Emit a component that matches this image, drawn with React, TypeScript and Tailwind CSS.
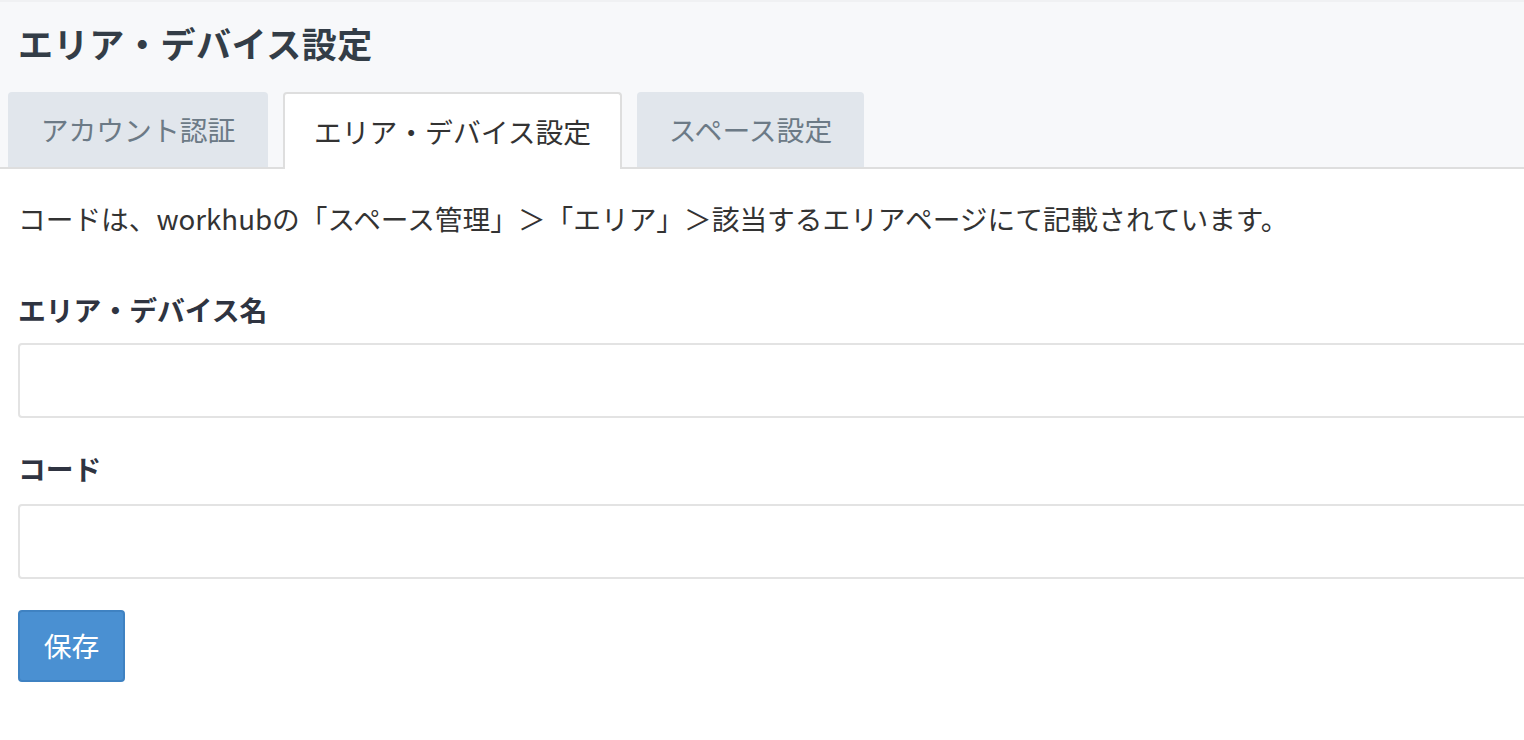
import React from "react";

const font = { fontFamily: '"Noto Sans CJK JP", "Noto Sans", sans-serif' };

export default function App() {
  return (
    <div className="w-full min-h-[740px] overflow-hidden bg-white text-[#333]" style={font}>
      <div className="bg-[#f7f8fa] border-t-2 border-[#f0f1f3]">
        <h1 className="h-[86px] px-[18px] pb-[3px] flex items-center text-[35px] font-bold text-[#333d47] tracking-[0.6px]">
          エリア・デバイス設定
        </h1>
        <div className="mt-[4px] pl-[8px] flex items-end gap-[15px] border-b-2 border-[#dedede]">
          <div className="w-[260px] h-[75px] flex items-center justify-center rounded-t-[4px] bg-[#e1e6ec] text-[27.8px] text-[#6c7a86]">
            アカウント認証
          </div>
          <div className="w-[339px] h-[77px] -mb-[2px] flex items-center justify-center rounded-t-[4px] bg-white border-2 border-b-0 border-[#dedede] text-[27.8px] text-[#333]">
            エリア・デバイス設定
          </div>
          <div className="w-[227px] h-[75px] flex items-center justify-center rounded-t-[4px] bg-[#e1e6ec] text-[27.8px] text-[#6c7a86]">
            スペース設定
          </div>
        </div>
      </div>
      <div className="px-[18px]">
        <p className="mt-[29px] leading-[40px] text-[27.7px] text-[#333] whitespace-nowrap">
          コードは、workhubの「スペース管理」＞「エリア」＞該当するエリアページにて記載されています。
        </p>
        <div className="mt-[51px] leading-[40px] text-[27.8px] font-bold text-[#2f3441]">エリア・デバイス名</div>
        <div className="mt-[14px] h-[75px] w-[1540px] rounded-[4px] border-2 border-[#e3e3e3] bg-white"></div>
        <div className="mt-[30px] leading-[40px] text-[27.8px] font-bold text-[#2f3441]">コード</div>
        <div className="mt-[16px] h-[75px] w-[1540px] rounded-[4px] border-2 border-[#e3e3e3] bg-white"></div>
        <button className="mt-[31px] h-[72px] w-[107px] rounded-[4px] border-2 border-[#3f82c2] bg-[#4a90d2] text-[27.8px] text-white flex items-center justify-center">
          保存
        </button>
      </div>
    </div>
  );
}
